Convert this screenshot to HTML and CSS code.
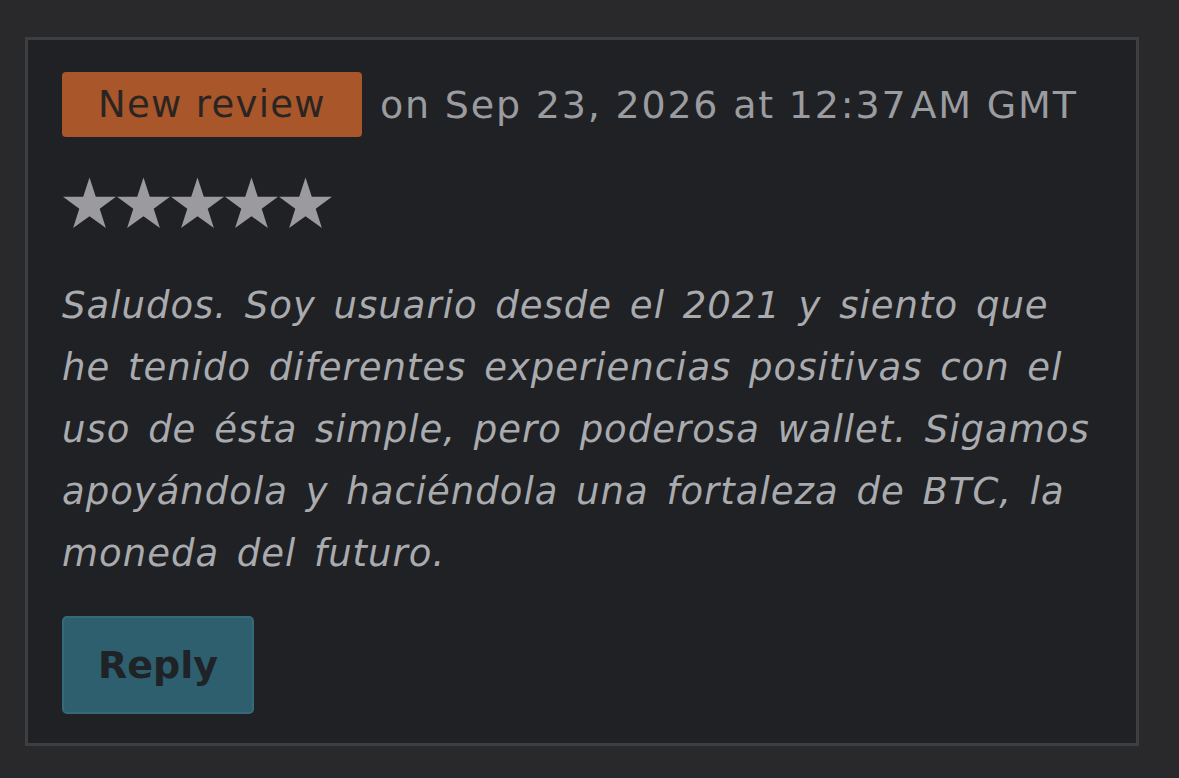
FILE: index.html
```html
<!DOCTYPE html>
<html>
<head>
<meta charset="utf-8">
<link rel="stylesheet" href="styles.css">
</head>
<body>
<div class="page">
  <div class="card">
    <div class="head">
      <span class="badge">New review</span>
      <span class="date">on Sep 23, 2026 at 12:37<span class="thin"> </span>AM GMT</span>
    </div>
    <div class="stars">
      <svg class="star" viewBox="0 0 54 52"><polygon points="27,0 33.4,19.6 54,19.7 37.4,31.8 43.7,51.5 27,39.4 10.3,51.5 16.6,31.8 0,19.7 20.6,19.6"/></svg>
      <svg class="star" viewBox="0 0 54 52"><polygon points="27,0 33.4,19.6 54,19.7 37.4,31.8 43.7,51.5 27,39.4 10.3,51.5 16.6,31.8 0,19.7 20.6,19.6"/></svg>
      <svg class="star" viewBox="0 0 54 52"><polygon points="27,0 33.4,19.6 54,19.7 37.4,31.8 43.7,51.5 27,39.4 10.3,51.5 16.6,31.8 0,19.7 20.6,19.6"/></svg>
      <svg class="star" viewBox="0 0 54 52"><polygon points="27,0 33.4,19.6 54,19.7 37.4,31.8 43.7,51.5 27,39.4 10.3,51.5 16.6,31.8 0,19.7 20.6,19.6"/></svg>
      <svg class="star" viewBox="0 0 54 52"><polygon points="27,0 33.4,19.6 54,19.7 37.4,31.8 43.7,51.5 27,39.4 10.3,51.5 16.6,31.8 0,19.7 20.6,19.6"/></svg>
    </div>
    <p class="text">Saludos. Soy usuario desde el 2021 y siento que<br>he tenido diferentes experiencias positivas con el<br>uso de ésta simple, pero poderosa wallet. Sigamos<br>apoyándola y haciéndola una fortaleza de BTC, la<br>moneda del futuro.</p>
    <button class="reply">Reply</button>
  </div>
</div>
</body>
</html>
```
FILE: styles.css
```css
html, body { margin: 0; padding: 0; }
body {
  background: #29292b;
  font-family: "DejaVu Sans", Verdana, sans-serif;
  width: 1179px;
  height: 778px;
  overflow: hidden;
}
.page {
  padding: 37px 40px 0 25px;
}
.card {
  box-sizing: border-box;
  width: 1114px;
  height: 709px;
  border: 3px solid #3d3e42;
  background: #202124;
  padding: 32px 20px 0 34px;
}
.head {
  display: flex;
  align-items: center;
  gap: 18px;
}
.badge {
  background: #a8562a;
  color: #2a2522;
  font-size: 37px;
  letter-spacing: 1.3px;
  border-radius: 4px;
  height: 65px;
  line-height: 65px;
  width: 300px;
  box-sizing: border-box;
  text-align: center;
}
.date {
  color: #9a9ca0;
  font-size: 38px;
  letter-spacing: 1.8px;
  white-space: nowrap;
}
.thin { font-size: 10px; letter-spacing: 0; }
.stars {
  display: flex;
  gap: 1px;
  margin-top: 40px;
  margin-left: 1px;
}
.star {
  width: 53px;
  height: 52px;
  fill: #9b9b9f;
}
.text {
  color: #a9abaf;
  font-style: italic;
  font-size: 37px;
  line-height: 62px;
  letter-spacing: 1px;
  word-spacing: 5px;
  margin: 46px 0 0 0;
  white-space: nowrap;
}
.reply {
  margin-top: 31px;
  width: 192px;
  height: 98px;
  background: #2d5f6e;
  border: 2px solid #356a7a;
  border-radius: 5px;
  color: #1f2226;
  font-family: "DejaVu Sans", Verdana, sans-serif;
  font-weight: bold;
  font-size: 38px;
  padding: 0;
}
```
